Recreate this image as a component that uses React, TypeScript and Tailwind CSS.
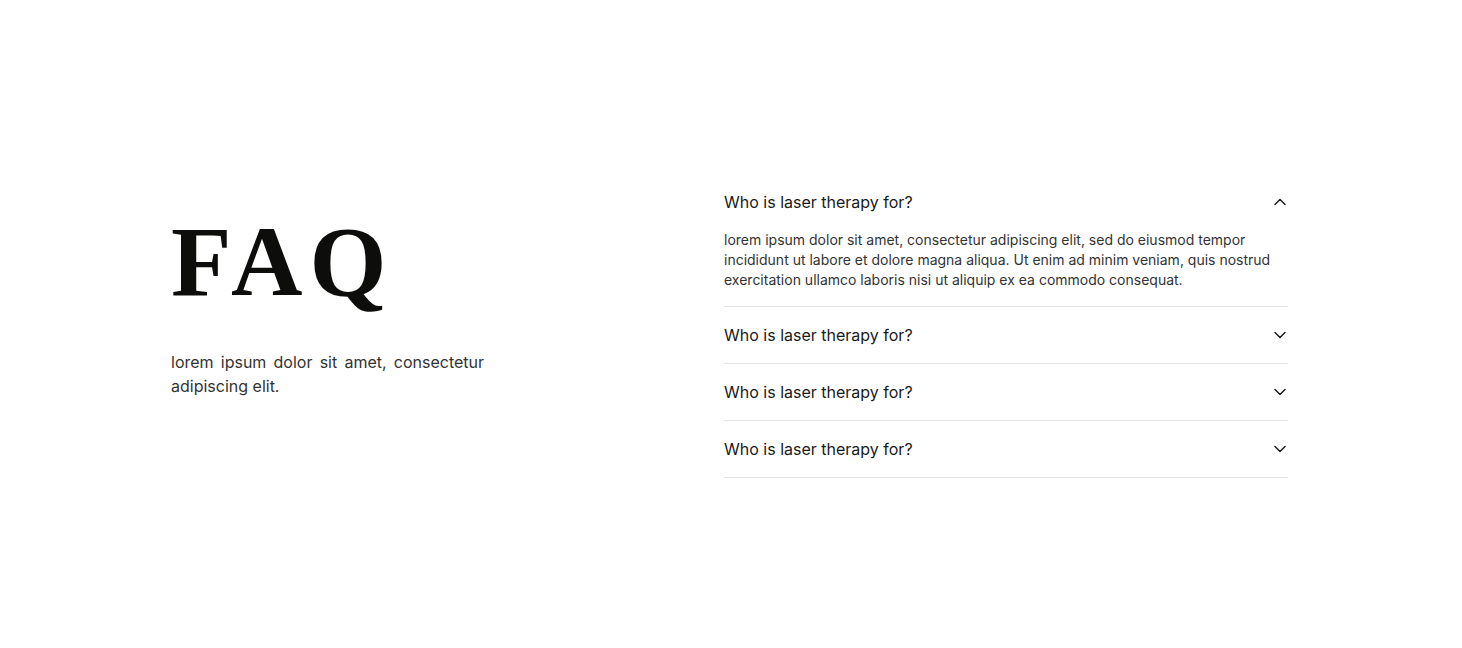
import React from 'react';
import { ChevronDown, ChevronUp } from 'lucide-react';

const items = [
    {
        q: 'Who is laser therapy for?',
        a: 'lorem ipsum dolor sit amet, consectetur adipiscing elit, sed do eiusmod tempor incididunt ut labore et dolore magna aliqua. Ut enim ad minim veniam, quis nostrud exercitation ullamco laboris nisi ut aliquip ex ea commodo consequat.',
        open: true,
    },
    { q: 'Who is laser therapy for?', a: '', open: false },
    { q: 'Who is laser therapy for?', a: '', open: false },
    { q: 'Who is laser therapy for?', a: '', open: false },
];

const App: React.FC = () => {
    return (
        <div className="min-h-[648px] w-full bg-white pt-[174px] font-['Inter']">
            <div className="w-[1120px] mx-auto flex items-start">
                {/* Left: title */}
                <div className="w-[553px] pt-[38px]">
                    <h1 className="font-['Liberation_Serif'] font-bold text-[99px] leading-none tracking-[0.07em] text-[#0d0d0b]">
                        FAQ
                    </h1>
                    <p className="mt-[39px] w-[313px] text-[16px] leading-6 text-[#333] text-justify">
                        lorem ipsum dolor sit amet, consectetur adipiscing elit.
                    </p>
                </div>

                {/* Right: accordion */}
                <div className="w-[564px]">
                    {items.map((item, i) => (
                        <div key={i} className="border-b border-[#e5e5e5]">
                            <button className="w-full flex items-center justify-between py-4 text-left">
                                <span className="text-[16px] leading-6 text-[#1a1a1a]">{item.q}</span>
                                {item.open ? (
                                    <ChevronUp size={20} strokeWidth={1.75} className="text-[#1a1a1a] -mr-[2px]" />
                                ) : (
                                    <ChevronDown size={20} strokeWidth={1.75} className="text-[#1a1a1a] -mr-[2px]" />
                                )}
                            </button>
                            {item.open && (
                                <p className="pb-4 text-[14px] leading-5 text-[#333] pr-4">{item.a}</p>
                            )}
                        </div>
                    ))}
                </div>
            </div>
        </div>
    );
};

export default App;
